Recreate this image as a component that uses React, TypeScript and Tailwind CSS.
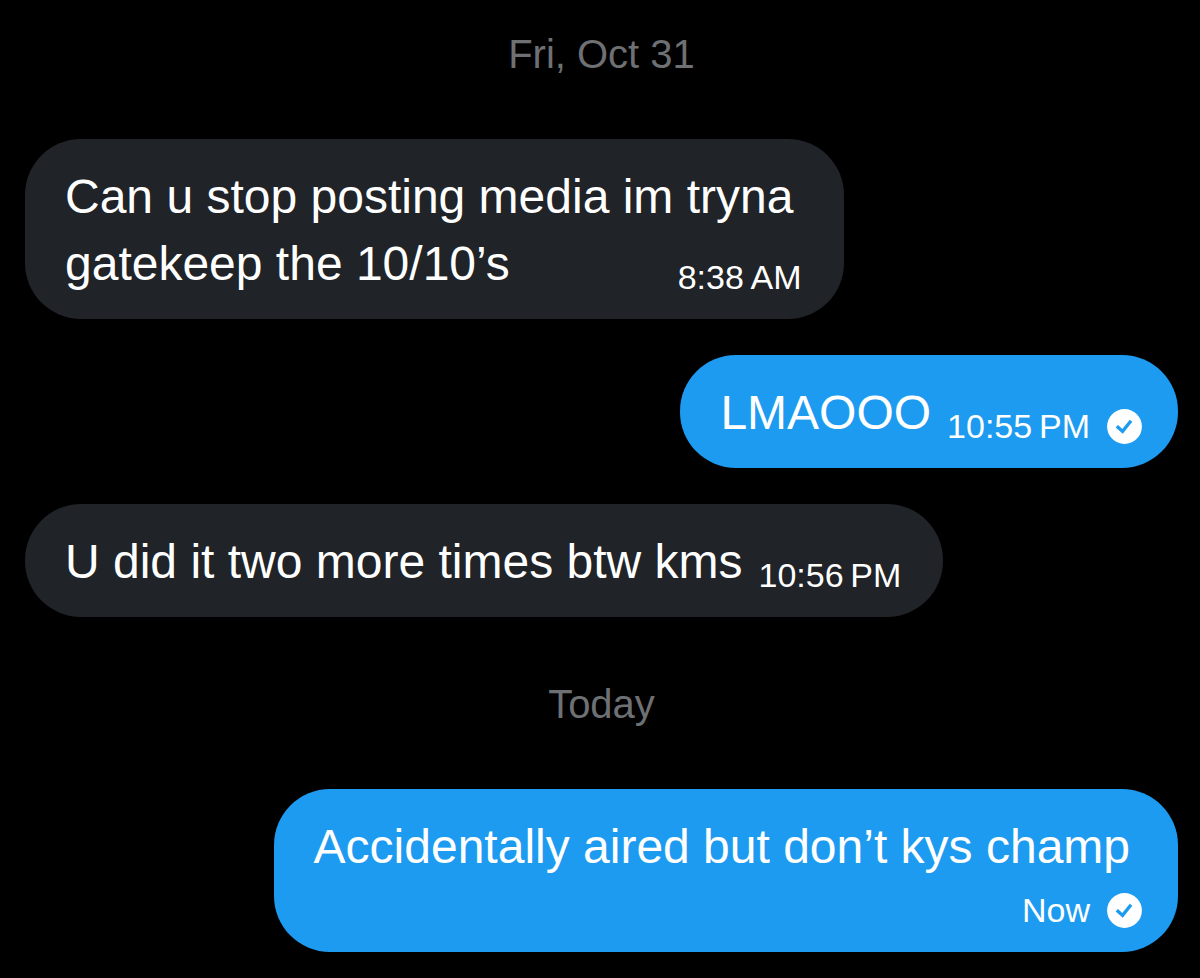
type Message = {
  id: number;
  lines: string[];
  time: string;
  mine?: boolean;
  // meta sits below the text instead of next to the last line
  stacked?: boolean;
  width?: string;
};

type Day = {
  label: string;
  messages: Message[];
};

const days: Day[] = [
  {
    label: "Fri, Oct 31",
    messages: [
      {
        id: 1,
        lines: ["Can u stop posting media im tryna", "gatekeep the 10/10’s"],
        time: "8:38\u202fAM",
        width: "w-[71%]",
      },
      { id: 2, lines: ["LMAOOO"], time: "10:55\u202fPM", mine: true },
      { id: 3, lines: ["U did it two more times btw kms"], time: "10:56\u202fPM" },
    ],
  },
  {
    label: "Today",
    messages: [
      {
        id: 4,
        lines: ["Accidentally aired but don’t kys champ"],
        time: "Now",
        mine: true,
        stacked: true,
      },
    ],
  },
];

function SentIcon() {
  return (
    <svg viewBox="0 0 35 35" className="size-[35px] shrink-0" role="img" aria-label="Sent">
      <circle cx="17.5" cy="17.5" r="17.4" fill="#fff" />
      <path
        d="M11 18.3l4.6 4.1 7.4-9.3"
        fill="none"
        stroke="#1d9bf0"
        strokeWidth="3.3"
        strokeLinecap="square"
      />
    </svg>
  );
}

function Bubble({ message }: { message: Message }) {
  const { lines, time, mine, stacked, width } = message;

  return (
    <li
      className={`flex pt-6 pb-[22px] pl-10 rounded-[56px] text-white ${
        mine ? "self-end pr-9 bg-[#1d9bf0]" : "self-start pr-[42px] bg-[#202327]"
      } ${stacked ? "flex-col gap-[13px]" : "items-end justify-between gap-4"} ${width ?? ""}`}
    >
      <p
        className={`text-[48px] leading-[67px] ${lines.length > 1 ? "-mr-40" : ""} ${
          stacked ? "pr-3" : ""
        }`}
      >
        {lines.map((line) => (
          <span key={line} className="block whitespace-nowrap">
            {line}
          </span>
        ))}
      </p>
      <div className="flex items-center justify-end gap-[17px] pb-[2px] shrink-0">
        <time className="text-[34px] leading-[35px] whitespace-nowrap">{time}</time>
        {mine && <SentIcon />}
      </div>
    </li>
  );
}

export default function App() {
  return (
    <main className="min-h-screen bg-black pl-[25px] pr-[22px] pb-[26px] font-['Liberation_Sans',Arial,sans-serif]">
      {days.map((day, i) => (
        <section key={day.label} className={i === 0 ? "pt-[30px]" : "pt-[63px]"}>
          <h2 className="text-center text-[40px] leading-[48px] text-[#6e7073]">{day.label}</h2>
          <ul className="mt-[61px] flex flex-col gap-9">
            {day.messages.map((message) => (
              <Bubble key={message.id} message={message} />
            ))}
          </ul>
        </section>
      ))}
    </main>
  );
}
